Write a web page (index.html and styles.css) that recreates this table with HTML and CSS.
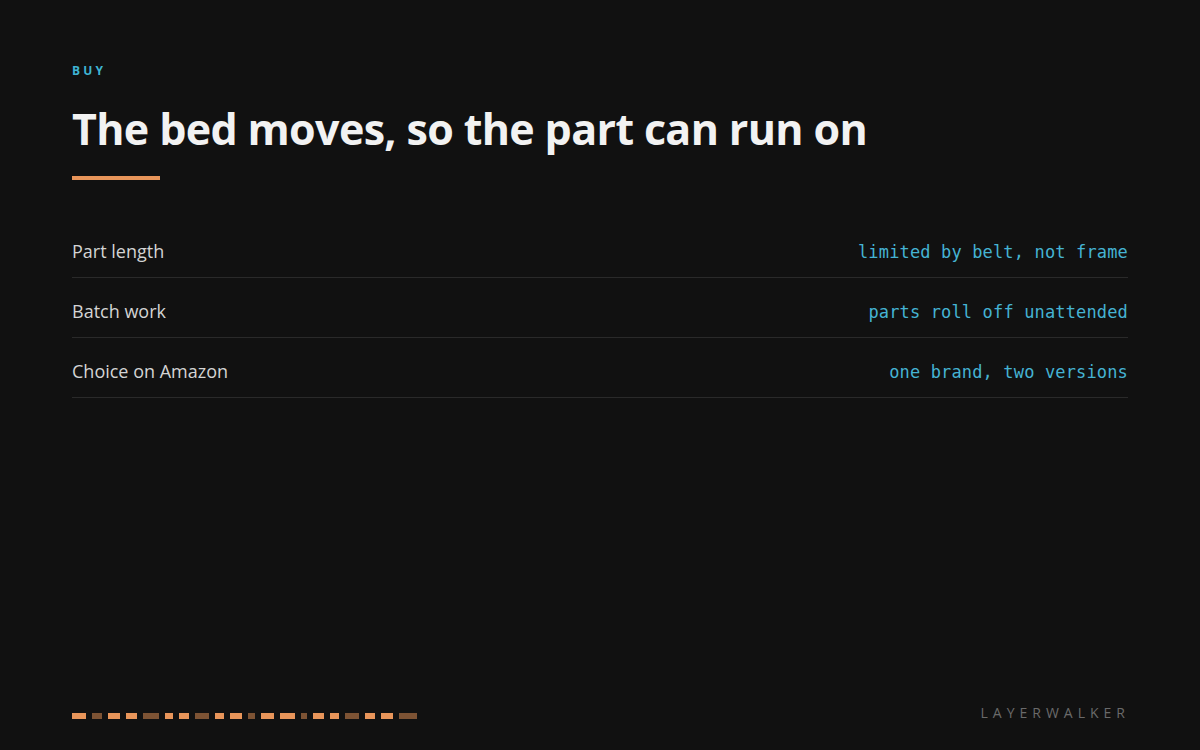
FILE: index.html
```html
<!DOCTYPE html>
<html lang="en">
<head>
    <meta charset="UTF-8">
    <meta name="viewport" content="width=device-width, initial-scale=1.0">
    <title>Buy</title>
    <link rel="stylesheet" href="styles.css">
</head>
<body>

    <div class="slide">
        <div class="top">
            <div class="eyebrow">BUY</div>
            <h1>The bed moves, so the part can run on</h1>
            <div class="rule"></div>

            <div class="rows">
                <div class="row">
                    <span class="label">Part length</span>
                    <span class="value">limited by belt, not frame</span>
                </div>
                <div class="row">
                    <span class="label">Batch work</span>
                    <span class="value">parts roll off unattended</span>
                </div>
                <div class="row">
                    <span class="label">Choice on Amazon</span>
                    <span class="value">one brand, two versions</span>
                </div>
            </div>
        </div>

        <div class="footer">
            <div class="dashes">
                <i style="width:14px"></i>
                <i class="dim" style="width:10px"></i>
                <i style="width:12px"></i>
                <i style="width:11px"></i>
                <i class="dim" style="width:16px"></i>
                <i style="width:8px"></i>
                <i style="width:10px"></i>
                <i class="dim" style="width:14px"></i>
                <i style="width:9px"></i>
                <i style="width:12px"></i>
                <i class="dim" style="width:7px"></i>
                <i style="width:13px"></i>
                <i style="width:15px"></i>
                <i class="dim" style="width:6px"></i>
                <i style="width:11px"></i>
                <i style="width:9px"></i>
                <i class="dim" style="width:14px"></i>
                <i style="width:10px"></i>
                <i style="width:12px"></i>
                <i class="dim" style="width:18px"></i>
            </div>
            <div class="brand">LAYERWALKER</div>
        </div>
    </div>

</body>
</html>
```

FILE: styles.css
```css
* {
    margin: 0;
    padding: 0;
    box-sizing: border-box;
}

body {
    background: #111111;
    font-family: "Open Sans", "Noto Sans", sans-serif;
    color: #eeeeee;
}

.slide {
    width: 1200px;
    height: 750px;
    padding: 62px 72px 22px;
    display: flex;
    flex-direction: column;
    justify-content: space-between;
}

.eyebrow {
    font-size: 12px;
    font-weight: 700;
    letter-spacing: 3.2px;
    color: #3fb4d4;
    line-height: 17px;
}

h1 {
    margin-top: 22px;
    font-size: 43px;
    font-weight: 700;
    line-height: 56px;
    color: #f2f2f2;
    letter-spacing: -0.65px;
}

.rule {
    width: 88px;
    height: 4px;
    background: #e8955a;
    margin-top: 19px;
}

.rows {
    margin-top: 38px;
}

.row {
    display: flex;
    justify-content: space-between;
    align-items: center;
    height: 60px;
    padding-top: 7px;
    border-bottom: 1px solid #2a2a2a;
}

.label {
    font-size: 18px;
    color: #d4d4d4;
}

.value {
    font-family: "DejaVu Sans Mono", "Liberation Mono", monospace;
    font-size: 17px;
    color: #45b3d3;
    letter-spacing: 0.15px;
    padding-top: 2px;
}

.footer {
    display: flex;
    justify-content: space-between;
    align-items: center;
}

.dashes {
    display: flex;
    gap: 6px;
}

.dashes i {
    display: block;
    height: 6px;
    background: #e8955a;
}

.dashes i.dim {
    background: #7d5334;
}

.brand {
    font-size: 14px;
    letter-spacing: 5px;
    color: #6a6a6a;
    margin-right: -2px;
    margin-bottom: 6px;
}
```
